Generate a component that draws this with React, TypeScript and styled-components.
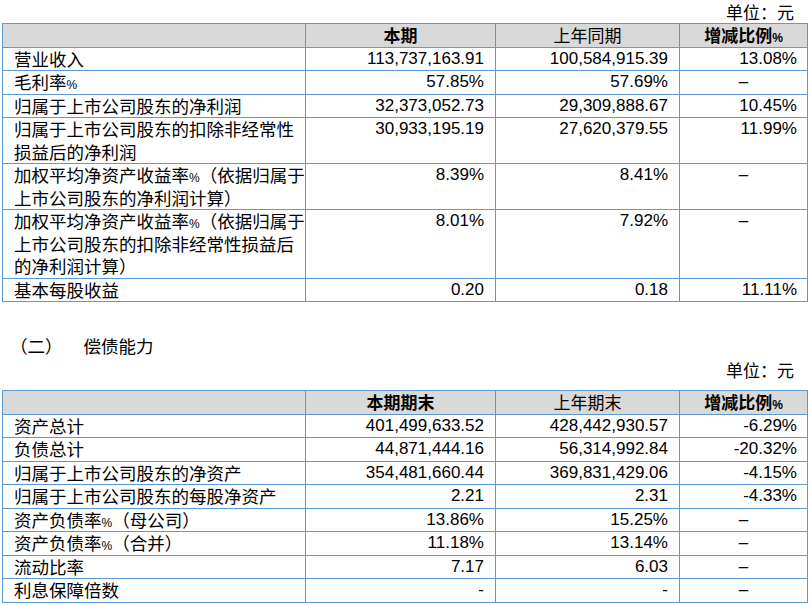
import React from 'react';
import styled, { createGlobalStyle } from 'styled-components';

const GlobalStyle = createGlobalStyle`
    html, body {
        margin: 0;
        padding: 0;
        background: #ffffff;
    }
    body {
        font-family: "Liberation Sans", "Noto Sans CJK SC", sans-serif;
        color: #000000;
    }
`

const Page = styled.div`
    width: 811px;
    padding: 0 4px 0 2px;
    box-sizing: border-box;
`

const UnitLine = styled.div<{ $top?: number; $bottom?: number }>`
    height: 23px;
    text-align: right;
    padding-right: 13px;
    font-family: "Noto Sans CJK SC", sans-serif;
    font-size: 17px;
    line-height: 23px;
    margin-top: ${p => p.$top || 0}px;
    margin-bottom: ${p => p.$bottom || 0}px;
`

const SectionTitle = styled.div`
    display: flex;
    height: 23px;
    padding-left: 8px;
    margin-top: 32px;
    font-family: "Noto Sans CJK SC", sans-serif;
    font-size: 17.5px;
    line-height: 23px;
`

const TitleName = styled.span`
    margin-left: 21px;
`

const Table = styled.table`
    width: 805px;
    border-collapse: collapse;
    table-layout: fixed;
`

const HeadCell = styled.th<{ $bold?: boolean }>`
    background: #d9d9d9;
    border: 1px solid #5b9bd5;
    padding: 0;
    text-align: center;
    font-family: "Noto Sans CJK SC", sans-serif;
    font-weight: ${p => (p.$bold ? 700 : 400)};
    font-size: 17px;
`

const LabelCell = styled.td`
    border: 1px solid #5b9bd5;
    padding: 0 0 0 11px;
    vertical-align: top;
    font-family: "Noto Sans CJK SC", sans-serif;
    font-size: 17.5px;
`

const NumCell = styled.td<{ $center?: boolean; $right?: number }>`
    border: 1px solid #5b9bd5;
    padding: 0 ${p => (p.$right ?? 11)}px 0 0;
    vertical-align: top;
    text-align: ${p => (p.$center ? 'center' : 'right')};
    font-family: "Liberation Sans", sans-serif;
    font-size: 17px;
`

// one text line of a cell, kept at a fixed pitch
const Line = styled.div`
    height: 22.5px;
    line-height: 22.5px;
    white-space: nowrap;
`

const Pct = styled.span`
    font-family: "Liberation Sans", sans-serif;
    font-size: 12px;
    line-height: 1;
`

type Row = [string | string[], string, string, string]

const withPct = (text: string) => {
    const parts = text.split('%')
    return parts.map((p, i) => (
        <React.Fragment key={i}>
            {p}
            {i < parts.length - 1 && <Pct>%</Pct>}
        </React.Fragment>
    ))
}

const table1: Row[] = [
    ['营业收入', '113,737,163.91', '100,584,915.39', '13.08%'],
    ['毛利率%', '57.85%', '57.69%', '–'],
    ['归属于上市公司股东的净利润', '32,373,052.73', '29,309,888.67', '10.45%'],
    [['归属于上市公司股东的扣除非经常性', '损益后的净利润'], '30,933,195.19', '27,620,379.55', '11.99%'],
    [['加权平均净资产收益率%（依据归属于', '上市公司股东的净利润计算）'], '8.39%', '8.41%', '–'],
    [['加权平均净资产收益率%（依据归属于', '上市公司股东的扣除非经常性损益后', '的净利润计算）'], '8.01%', '7.92%', '–'],
    ['基本每股收益', '0.20', '0.18', '11.11%'],
]

const table2: Row[] = [
    ['资产总计', '401,499,633.52', '428,442,930.57', '-6.29%'],
    ['负债总计', '44,871,444.16', '56,314,992.84', '-20.32%'],
    ['归属于上市公司股东的净资产', '354,481,660.44', '369,831,429.06', '-4.15%'],
    ['归属于上市公司股东的每股净资产', '2.21', '2.31', '-4.33%'],
    ['资产负债率%（母公司）', '13.86%', '15.25%', '–'],
    ['资产负债率%（合并）', '11.18%', '13.14%', '–'],
    ['流动比率', '7.17', '6.03', '–'],
    ['利息保障倍数', '-', '-', '–'],
]

interface TableProps {
    current: string
    previous: string
    rows: Row[]
}

function DataTable(props: TableProps) {
    return (
        <Table>
            <colgroup>
                <col style={{ width: 303 }} />
                <col style={{ width: 190 }} />
                <col style={{ width: 184 }} />
                <col style={{ width: 128 }} />
            </colgroup>
            <thead>
                <tr>
                    <HeadCell><Line /></HeadCell>
                    <HeadCell $bold><Line>{props.current}</Line></HeadCell>
                    <HeadCell><Line>{props.previous}</Line></HeadCell>
                    <HeadCell $bold><Line>{withPct('增减比例%')}</Line></HeadCell>
                </tr>
            </thead>
            <tbody>
                {props.rows.map((row, i) => {
                    const lines = Array.isArray(row[0]) ? row[0] : [row[0]]
                    const dash = row[3] === '–'
                    return (
                        <tr key={i}>
                            <LabelCell>
                                {lines.map((line, j) => (
                                    <Line key={j}>{withPct(line)}</Line>
                                ))}
                            </LabelCell>
                            <NumCell><Line>{row[1]}</Line></NumCell>
                            <NumCell><Line>{row[2]}</Line></NumCell>
                            <NumCell $center={dash} $right={dash ? 0 : 10}><Line>{row[3]}</Line></NumCell>
                        </tr>
                    )
                })}
            </tbody>
        </Table>
    )
}

export default function App() {
    return (
        <Page>
            <GlobalStyle />
            <UnitLine>单位：元</UnitLine>
            <DataTable current="本期" previous="上年同期" rows={table1} />

            <SectionTitle>
                <span>（二）</span>
                <TitleName>偿债能力</TitleName>
            </SectionTitle>

            <UnitLine $top={1} $bottom={9}>单位：元</UnitLine>
            <DataTable current="本期期末" previous="上年期末" rows={table2} />
        </Page>
    )
}
